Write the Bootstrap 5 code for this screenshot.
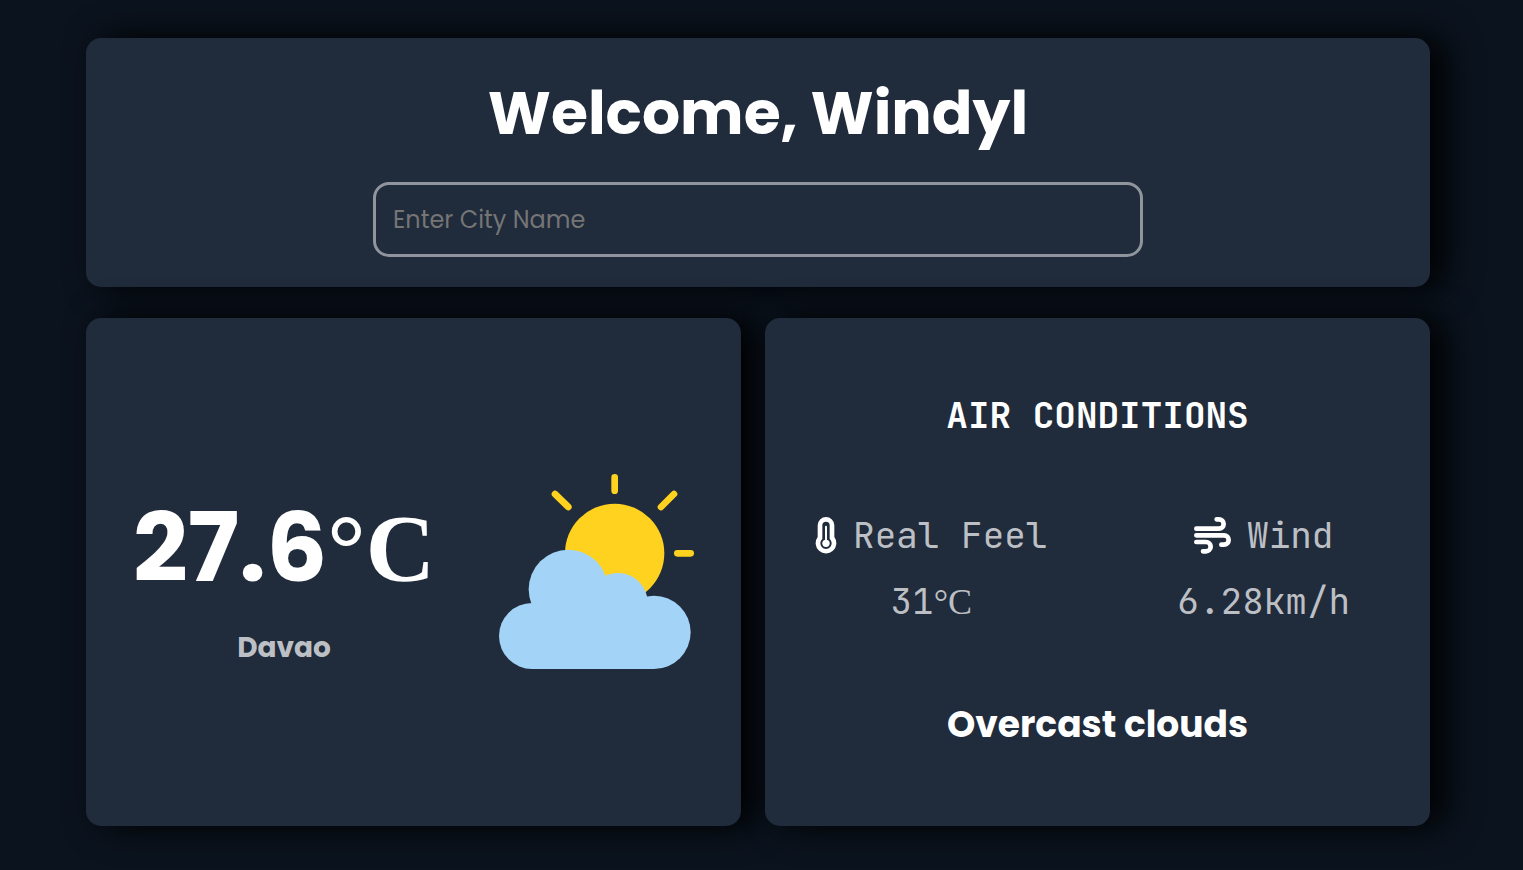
<!DOCTYPE html>
<html lang="en">
<head>
<meta charset="utf-8">
<meta name="viewport" content="width=device-width, initial-scale=1">
<title>Weather</title>
<link href="https://cdn.jsdelivr.net/npm/bootstrap@5.3.0/dist/css/bootstrap.min.css" rel="stylesheet">
<style>
  body { background: #0b131e; color: #fff; font-family: Poppins, Inter, sans-serif; }
  .page { padding: 38px 93px 44px 86px; gap: 31px; }
  .panel { background: #202b3b; border-radius: 15px; box-shadow: 15px 0 35px #000; }
  .welcome { padding: 28px 24px 30px; gap: 22px; }
  .welcome h1 { font-size: 60px; line-height: 94px; font-weight: 700; }
  .city-input { width: 100%; max-width: 770px; height: 75px; padding: 0 17px; font-size: 24px; color: #fff;
    background: transparent; border: 3px solid #90959d; border-radius: 16px; }
  .city-input::placeholder { color: #757575; opacity: 1; }
  .boards { display: grid; grid-template-columns: 655fr 665fr; gap: 24px; }
  .now { gap: 64px; padding-bottom: 2px; }
  .temp { font-size: 96px; line-height: 150px; font-weight: 700; }
  .unit { font-family: "Liberation Serif", serif; line-height: 1; }
  .place { font-size: 28px; line-height: 42px; font-weight: 700; color: #bcbfc4; margin-top: 4px; }
  .mono { font-family: "JetBrains Mono", "DejaVu Sans Mono", monospace; font-size: 36px; line-height: 54px; }
  .air { gap: 66px; padding-bottom: 4px; }
  .readings { color: #bcbfc4; }
  .reading { gap: 12px; }
  .reading svg { color: #fff; }
  .sky { font-size: 36px; line-height: 54px; font-weight: 700; margin-top: 4px; }
  @media (max-width: 1100px) {
    .page { padding: 24px; }
    .boards { grid-template-columns: 1fr; }
    .boards .panel { padding: 32px 0; }
  }
</style>
</head>
<body>
<main class="page d-flex flex-column min-vh-100">
  <header class="panel welcome d-flex flex-column align-items-center">
    <h1 class="mb-0 text-center">Welcome, Windyl</h1>
    <input class="city-input" type="text" placeholder="Enter City Name" aria-label="Enter City Name">
  </header>
  <div class="boards flex-grow-1">
    <section class="panel now d-flex flex-wrap align-items-center justify-content-center">
      <div class="text-center">
        <div class="temp text-nowrap">27.6<span class="unit">°C</span></div>
        <div class="place">Davao</div>
      </div>
      <svg width="195" height="195" viewBox="54 42 585 585" aria-hidden="true">
        <g fill="none" stroke="#ffd220" stroke-width="20" stroke-linecap="round">
          <path d="M401 52V92M589 280H629M579 102L540 141M222 102L262 141"/>
        </g>
        <circle cx="401" cy="280" r="149" fill="#ffd220"/>
        <g fill="#a3d4f7">
          <circle cx="153" cy="528" r="99"/>
          <circle cx="262" cy="388" r="119"/>
          <circle cx="411" cy="428" r="89"/>
          <circle cx="519" cy="517" r="110"/>
          <path d="M153 429H519V627H153z"/>
        </g>
      </svg>
    </section>
    <section class="panel air d-flex flex-column justify-content-center">
      <h2 class="mono mb-0 text-center fw-bold">AIR CONDITIONS</h2>
      <div class="readings mono row g-0 text-center">
        <div class="reading col-6 d-flex flex-column">
          <div class="d-flex align-items-center justify-content-center gap-3">
            <svg width="22" height="37" viewBox="44 48 66 111" aria-hidden="true">
              <path fill="currentColor" d="M77 48a25 25 0 0 1 25 25v35a31 31 0 1 1-50 0V73a25 25 0 0 1 25-25z"/>
              <path fill="#202b3b" d="M77 62a11 11 0 0 1 11 11v41a17 17 0 1 1-22 0V73a11 11 0 0 1 11-11z"/>
              <path stroke="currentColor" stroke-width="6" stroke-linecap="round" d="M77 77V127"/>
              <circle cx="77" cy="127" r="11" fill="currentColor"/>
            </svg>
            <span>Real Feel</span>
          </div>
          <div>31<span class="unit">°C</span></div>
        </div>
        <div class="reading col-6 d-flex flex-column">
          <div class="d-flex align-items-center justify-content-center gap-3">
            <svg width="37" height="37" viewBox="72 48 111 111" fill="none" stroke="currentColor" stroke-width="14" stroke-linecap="round" aria-hidden="true">
              <path d="M79 83H147a14 14 0 0 0 0-28H140M79 103H162a14 14 0 0 1 0 28H154M79 123H108a14 14 0 0 1 0 28H99"/>
            </svg>
            <span>Wind</span>
          </div>
          <div>6.28km/h</div>
        </div>
      </div>
      <div class="sky text-center">Overcast clouds</div>
    </section>
  </div>
</main>
<script src="https://cdn.jsdelivr.net/npm/bootstrap@5.3.0/dist/js/bootstrap.bundle.min.js"></script>
</body>
</html>
